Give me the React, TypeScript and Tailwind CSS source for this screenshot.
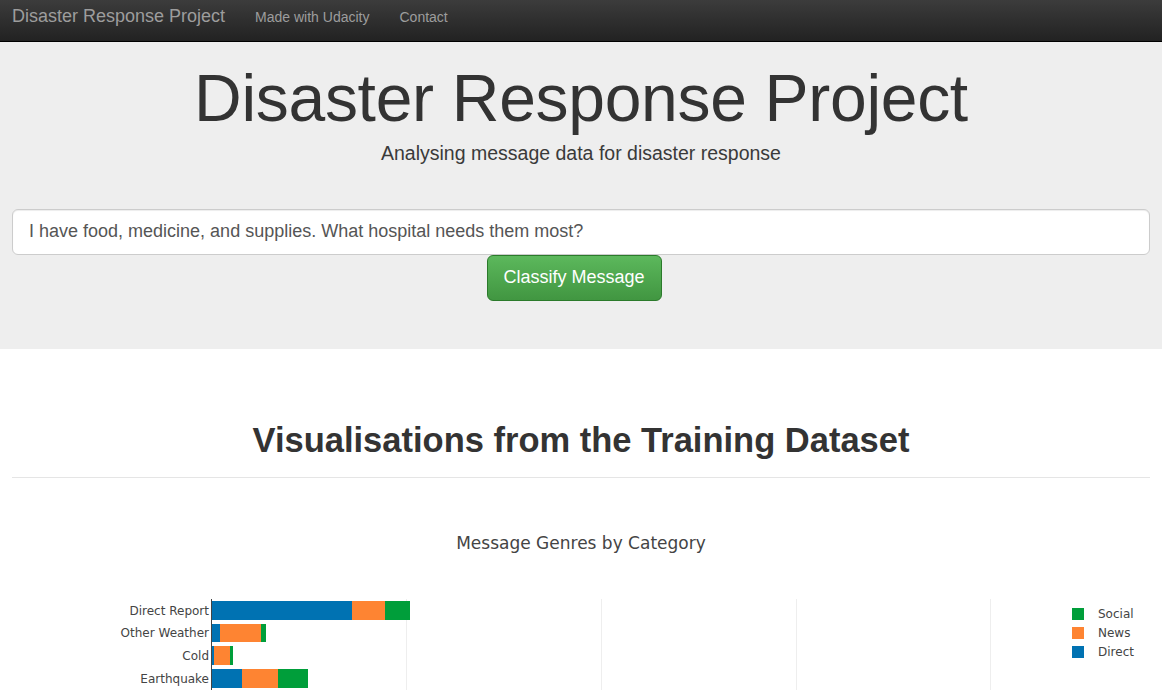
const bars = [
  { label: "Direct Report", y: 600, h: 19, b: [212, 352], o: [352, 385], g: [385, 410] },
  { label: "Other Weather", y: 623, h: 18, b: [212, 220], o: [220, 261], g: [261, 266] },
  { label: "Cold", y: 645, h: 19, b: [212, 214], o: [214, 230], g: [230, 233] },
  { label: "Earthquake", y: 668, h: 19, b: [212, 242], o: [242, 278], g: [278, 308] },
];

// chart block starts near page y = 477
const top = 477;

function Chart() {
  return (
    <div className="relative h-[300px] w-full">
      <div className="pt-[53px] text-center text-[17px] text-[#444]" style={{ fontFamily: '"DejaVu Sans", Verdana, sans-serif' }}>
        Message Genres by Category
      </div>
      <svg className="absolute left-0 top-0" width="1162" height="300" style={{ fontFamily: '"DejaVu Sans", Verdana, sans-serif' }}>
        {[406, 601, 796, 990].map((x) => (
          <line key={x} x1={x + 0.5} x2={x + 0.5} y1={598 - top} y2={300} stroke="#eee" strokeWidth="1" />
        ))}
        {bars.map((r) => {
          const y = r.y - top;
          return (
            <g key={r.label}>
              <rect x={r.b[0]} y={y} width={r.b[1] - r.b[0]} height={r.h} fill="#0072b2" />
              <rect x={r.o[0]} y={y} width={r.o[1] - r.o[0]} height={r.h} fill="#fe8432" />
              <rect x={r.g[0]} y={y} width={r.g[1] - r.g[0]} height={r.h} fill="#009e3a" />
              <text x={209} y={y + r.h / 2 + 4} textAnchor="end" fontSize="12" fill="#444">
                {r.label}
              </text>
            </g>
          );
        })}
        <line x1={211.5} x2={211.5} y1={598 - top} y2={300} stroke="#444" strokeWidth="1" />
        {[
          { c: "#009e3a", t: "Social", y: 613 },
          { c: "#fe8432", t: "News", y: 632 },
          { c: "#0072b2", t: "Direct", y: 651 },
        ].map((l) => (
          <g key={l.t}>
            <rect x={1072} y={l.y - top - 6} width={12} height={12} fill={l.c} />
            <text x={1098} y={l.y - top + 4} fontSize="12" fill="#444">
              {l.t}
            </text>
          </g>
        ))}
      </svg>
    </div>
  );
}

export default function App() {
  return (
    <div className="h-[690px] overflow-hidden bg-white text-[#333]" style={{ fontFamily: '"Liberation Sans", Arial, sans-serif' }}>
      <nav className="flex h-[42px] items-start border-b border-black bg-gradient-to-b from-[#3c3c3c] to-[#222] px-3 pt-[5px]">
        <span className="text-[18px] leading-[22px] text-[#9d9d9d]">Disaster Response Project</span>
        <span className="ml-[30px] pt-[2px] text-[14px] leading-[20px] text-[#9d9d9d]">Made with Udacity</span>
        <span className="ml-[30px] pt-[2px] text-[14px] leading-[20px] text-[#9d9d9d]">Contact</span>
      </nav>
      <div className="h-[307px] bg-[#eee] px-3 pt-[20px]">
        <h1 className="text-center text-[66px] leading-[1.1] tracking-[-0.3px] text-[#333]">Disaster Response Project</h1>
        <p className="mt-[4px] text-center text-[19.5px] text-[#3a3a3a]">Analysing message data for disaster response</p>
        <div className="mt-[41px]">
          <div className="flex h-[46px] items-center rounded-[6px] border border-[#ccc] bg-white px-4 text-[18px] text-[#555] shadow-[inset_0_1px_1px_rgba(0,0,0,0.075)]">
            I have food, medicine, and supplies. What hospital needs them most?
          </div>
          <div className="flex justify-center">
            <button className="ml-[-14px] h-[46px] w-[175px] rounded-[6px] border border-[#2b7a2b] bg-gradient-to-b from-[#5cb85c] to-[#419641] text-[18px] text-white">
              Classify Message
            </button>
          </div>
        </div>
      </div>
      <div className="px-3">
        <h2 className="mt-[73px] text-center text-[34.5px] font-bold leading-[1.1] text-[#333]">Visualisations from the Training Dataset</h2>
        <hr className="mt-[17px] border-t border-[#e5e5e5]" />
      </div>
      <Chart />
    </div>
  );
}
